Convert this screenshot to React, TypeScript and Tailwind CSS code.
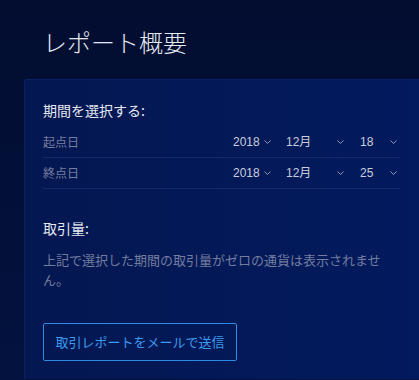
function Chevron() {
  return (
    <svg width="7" height="4" viewBox="0 0 7 4" fill="none" className="shrink-0">
      <path d="M0.5 0.5L3.5 3.5L6.5 0.5" stroke="#8f98b6" strokeWidth="1" />
    </svg>
  );
}

function Select({ value, width }: { value: string; width: string }) {
  return (
    <div className={`flex items-center justify-between ${width}`}>
      <span
        className="text-[12px] text-[#c8cede]"
        style={{ fontFamily: '"Liberation Sans", "Noto Sans CJK JP", sans-serif' }}
      >
        {value}
      </span>
      <Chevron />
    </div>
  );
}

function DateRow({ label, day }: { label: string; day: string }) {
  return (
    <div className="flex h-[31px] items-center border-b border-[#17296a]">
      <span className="flex-1 text-[12px] text-[#777fa0]">{label}</span>
      <div className="flex items-center pr-[3px]">
        <Select value="2018" width="w-[38px] mr-[15px]" />
        <Select value="12月" width="w-[58px] mr-[16px]" />
        <Select value={day} width="w-[37px]" />
      </div>
    </div>
  );
}

export default function App() {
  return (
    <div
      className="h-[380px] w-[419px] overflow-hidden bg-linear-to-b from-[#020d30] to-[#03123f]"
      style={{ fontFamily: '"Noto Sans CJK JP", "Noto Sans", sans-serif' }}
    >
      <h1 className="pl-[43px] pt-[26px] text-[24px] leading-[32px] font-light text-[#e4e8f1]">
        レポート概要
      </h1>
      <section className="ml-[24px] mt-[21px] h-[300px] rounded-tl-[3px] border-l border-t border-[#0c2163] bg-linear-to-r from-[#041751] to-[#021a5e] pl-[18px] pr-[19px] pt-[20px]">
        <h2 className="text-[14px] leading-[20px] text-[#e4e8f1]">期間を選択する:</h2>
        <div className="mt-[7px]">
          <DateRow label="起点日" day="18" />
          <DateRow label="終点日" day="25" />
        </div>
        <h2 className="mt-[29px] text-[14px] leading-[20px] text-[#e4e8f1]">取引量:</h2>
        <p className="mt-[12px] text-[13px] leading-[20px] text-[#737d9e]">
          上記で選択した期間の取引量がゼロの通貨は表示されません。
        </p>
        <button className="mt-[33px] h-[38px] w-[194px] rounded-[2px] border border-[#2a8ae6] text-[13px] text-[#3b9bf0]">
          取引レポートをメールで送信
        </button>
      </section>
    </div>
  );
}
